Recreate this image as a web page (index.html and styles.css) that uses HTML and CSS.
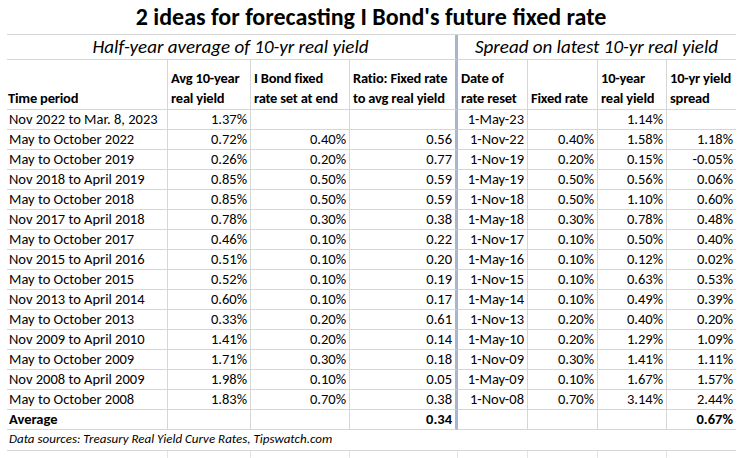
FILE: index.html
```html
<!DOCTYPE html>
<html>
<head>
<meta charset="utf-8">
<link rel="stylesheet" href="styles.css">
</head>
<body>
<table class="sheet">
  <colgroup>
    <col class="c-a"><col class="c-b"><col class="c-c"><col class="c-d">
    <col class="c-e"><col class="c-f"><col class="c-g"><col class="c-h">
  </colgroup>
  <tbody>
    <tr class="row-title"><td colspan="8" class="title">2 ideas for forecasting I Bond's future fixed rate</td></tr>
    <tr class="row-sub">
      <td colspan="4" class="sub split">Half-year average of 10-yr real yield</td>
      <td colspan="4" class="sub last">Spread on latest 10-yr real yield</td>
    </tr>
    <tr class="row-head">
      <td>Time period</td>
      <td>Avg 10-year<br>real yield</td>
      <td>I Bond fixed<br>rate set at end</td>
      <td class="split">Ratio: Fixed rate<br>to avg real yield</td>
      <td>Date of<br>rate reset</td>
      <td>Fixed rate</td>
      <td>10-year<br>real yield</td>
      <td class="last">10-yr yield<br>spread</td>
    </tr>
    <tr><td>Nov 2022 to Mar. 8, 2023</td><td class="n">1.37%</td><td class="n"></td><td class="n split"></td><td class="n">1-May-23</td><td class="n"></td><td class="n">1.14%</td><td class="n last"></td></tr>
    <tr><td>May to October 2022</td><td class="n">0.72%</td><td class="n">0.40%</td><td class="n split">0.56</td><td class="n">1-Nov-22</td><td class="n">0.40%</td><td class="n">1.58%</td><td class="n last">1.18%</td></tr>
    <tr><td>May to October 2019</td><td class="n">0.26%</td><td class="n">0.20%</td><td class="n split">0.77</td><td class="n">1-Nov-19</td><td class="n">0.20%</td><td class="n">0.15%</td><td class="n last">-0.05%</td></tr>
    <tr><td>Nov 2018 to April 2019</td><td class="n">0.85%</td><td class="n">0.50%</td><td class="n split">0.59</td><td class="n">1-May-19</td><td class="n">0.50%</td><td class="n">0.56%</td><td class="n last">0.06%</td></tr>
    <tr><td>May to October 2018</td><td class="n">0.85%</td><td class="n">0.50%</td><td class="n split">0.59</td><td class="n">1-Nov-18</td><td class="n">0.50%</td><td class="n">1.10%</td><td class="n last">0.60%</td></tr>
    <tr><td>Nov 2017 to April 2018</td><td class="n">0.78%</td><td class="n">0.30%</td><td class="n split">0.38</td><td class="n">1-May-18</td><td class="n">0.30%</td><td class="n">0.78%</td><td class="n last">0.48%</td></tr>
    <tr><td>May to October 2017</td><td class="n">0.46%</td><td class="n">0.10%</td><td class="n split">0.22</td><td class="n">1-Nov-17</td><td class="n">0.10%</td><td class="n">0.50%</td><td class="n last">0.40%</td></tr>
    <tr><td>Nov 2015 to April 2016</td><td class="n">0.51%</td><td class="n">0.10%</td><td class="n split">0.20</td><td class="n">1-May-16</td><td class="n">0.10%</td><td class="n">0.12%</td><td class="n last">0.02%</td></tr>
    <tr><td>May to October 2015</td><td class="n">0.52%</td><td class="n">0.10%</td><td class="n split">0.19</td><td class="n">1-Nov-15</td><td class="n">0.10%</td><td class="n">0.63%</td><td class="n last">0.53%</td></tr>
    <tr><td>Nov 2013 to April 2014</td><td class="n">0.60%</td><td class="n">0.10%</td><td class="n split">0.17</td><td class="n">1-May-14</td><td class="n">0.10%</td><td class="n">0.49%</td><td class="n last">0.39%</td></tr>
    <tr><td>May to October 2013</td><td class="n">0.33%</td><td class="n">0.20%</td><td class="n split">0.61</td><td class="n">1-Nov-13</td><td class="n">0.20%</td><td class="n">0.40%</td><td class="n last">0.20%</td></tr>
    <tr><td>Nov 2009 to April 2010</td><td class="n">1.41%</td><td class="n">0.20%</td><td class="n split">0.14</td><td class="n">1-May-10</td><td class="n">0.20%</td><td class="n">1.29%</td><td class="n last">1.09%</td></tr>
    <tr><td>May to October 2009</td><td class="n">1.71%</td><td class="n">0.30%</td><td class="n split">0.18</td><td class="n">1-Nov-09</td><td class="n">0.30%</td><td class="n">1.41%</td><td class="n last">1.11%</td></tr>
    <tr><td>Nov 2008 to April 2009</td><td class="n">1.98%</td><td class="n">0.10%</td><td class="n split">0.05</td><td class="n">1-May-09</td><td class="n">0.10%</td><td class="n">1.67%</td><td class="n last">1.57%</td></tr>
    <tr><td>May to October 2008</td><td class="n">1.83%</td><td class="n">0.70%</td><td class="n split">0.38</td><td class="n">1-Nov-08</td><td class="n">0.70%</td><td class="n">3.14%</td><td class="n last">2.44%</td></tr>
    <tr class="row-avg"><td>Average</td><td class="n"></td><td class="n"></td><td class="n split">0.34</td><td class="n"></td><td class="n"></td><td class="n"></td><td class="n last">0.67%</td></tr>
    <tr class="row-src"><td colspan="8" class="src">Data sources: Treasury Real Yield Curve Rates, Tipswatch.com</td></tr>
    <tr class="row-blank"><td></td><td></td><td></td><td></td><td></td><td></td><td></td><td class="last"></td></tr>
  </tbody>
</table>
</body>
</html>
```

FILE: styles.css
```css
html, body {
  margin: 0;
  padding: 0;
  background: #ffffff;
}

body {
  font-family: Carlito, Lato, "Liberation Sans", sans-serif;
  color: #000000;
  font-size: 14.5px;
}

.sheet {
  margin-left: 7px;
  border-collapse: separate;
  border-spacing: 0;
  table-layout: fixed;
  width: 729px;
}

.c-a { width: 161px; }
.c-b { width: 83px; }
.c-c { width: 99px; }
.c-d { width: 108px; }
.c-e { width: 70px; }
.c-f { width: 70px; }
.c-g { width: 69px; }
.c-h { width: 69px; }

.sheet td {
  box-sizing: border-box;
  height: 20px;
  padding: 0 3px 1px 2px;
  line-height: 18px;
  vertical-align: bottom;
  white-space: nowrap;
  overflow: hidden;
  border-bottom: 1px solid #d6d6d6;
  border-right: 1px solid #d6d6d6;
}

.sheet td.last {
  border-right: none;
}

.sheet td.split {
  border-right: 3px solid #a8b6cd;
}

.sheet tr {
  height: 20px;
}

.sheet td.n {
  text-align: right;
}

.row-title {
  height: 35px;
}

.sheet td.title {
  height: 35px;
  border-right: none;
  text-align: center;
  font-weight: bold;
  font-size: 24px;
  line-height: 28px;
  padding-bottom: 3px;
}

.row-sub {
  height: 25px;
}

.sheet td.sub {
  height: 25px;
  text-align: center;
  font-style: italic;
  font-size: 19px;
  line-height: 22px;
  padding-bottom: 1px;
}

.row-head {
  height: 50px;
}

.row-head td {
  height: 50px;
  font-weight: bold;
  line-height: 20px;
  padding-left: 3px;
  padding-right: 0;
  padding-bottom: 1px;
  letter-spacing: -0.2px;
}

.row-head td:first-child {
  padding-left: 1px;
}

.row-avg td {
  font-weight: bold;
}

.sheet td.src {
  border-right: none;
  font-style: italic;
  font-size: 13px;
  padding-bottom: 2px;
}

.row-blank td {
  border-right-color: #e4e4e4;
  border-bottom-color: #e4e4e4;
}
```
